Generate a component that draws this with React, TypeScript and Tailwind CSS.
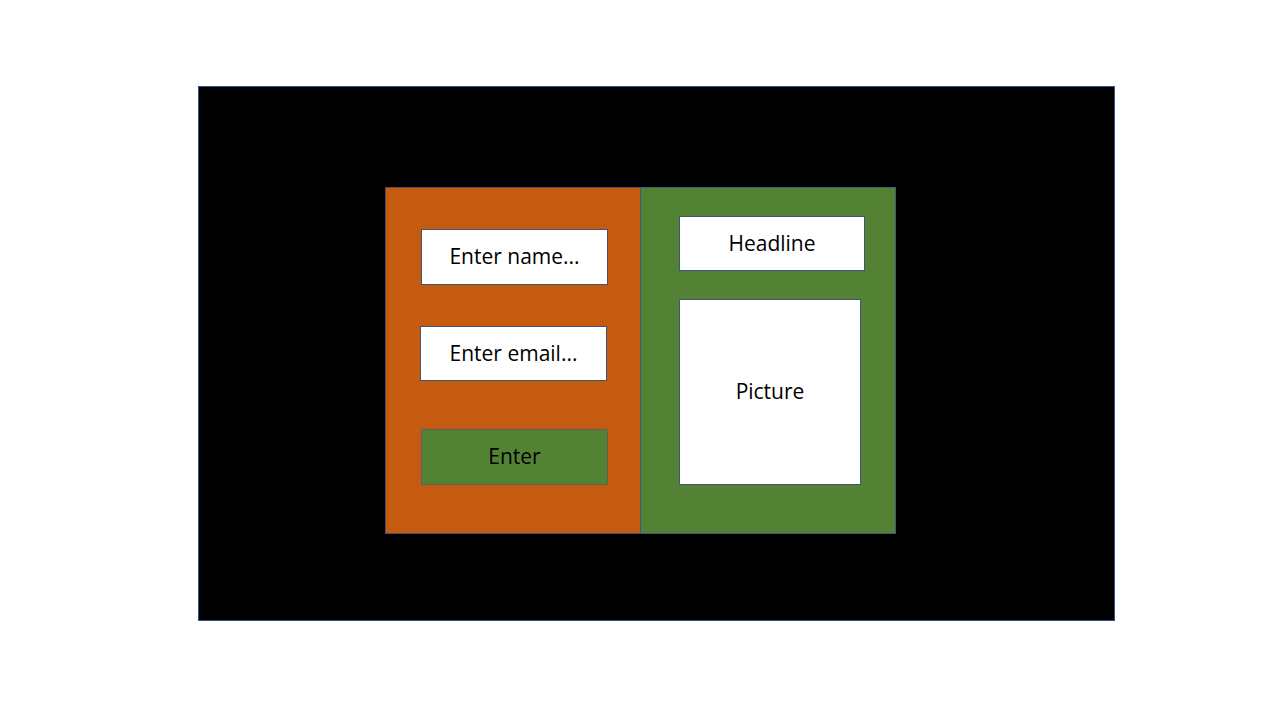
export default function App() {
  const box =
    "flex items-center justify-center bg-white border border-[#3f5573] text-black text-[21px]";
  return (
    <div
      className="w-[1280px] h-[720px] bg-white pt-[86px] pl-[198px]"
      style={{ fontFamily: '"Open Sans", "Noto Sans", sans-serif' }}
    >
      <div className="w-[917px] h-[535px] bg-black border border-[#2F528F] pt-[100px] pl-[186px]">
        <div className="flex">
          {/* form side */}
          <div className="w-[255px] h-[347px] bg-[#C55A11] border border-[#5a4a6a] border-r-0 pt-[41px] pl-[35px] flex flex-col">
            <div className={`${box} w-[187px] h-[56px]`}>Enter name...</div>
            <div className={`${box} w-[187px] h-[55px] mt-[41px] -ml-px`}>Enter email...</div>
            <div className="flex items-center justify-center w-[187px] h-[56px] mt-[48px] bg-[#548235] border border-[#5f5f5f] text-black text-[21px]">
              Enter
            </div>
          </div>
          {/* content side */}
          <div className="w-[256px] h-[347px] bg-[#548235] border border-[#3f5a7a] pt-[28px] pl-[38px] flex flex-col">
            <div className={`${box} w-[186px] h-[55px]`}>Headline</div>
            <div className={`${box} w-[182px] h-[186px] mt-[28px]`}>Picture</div>
          </div>
        </div>
      </div>
    </div>
  );
}
